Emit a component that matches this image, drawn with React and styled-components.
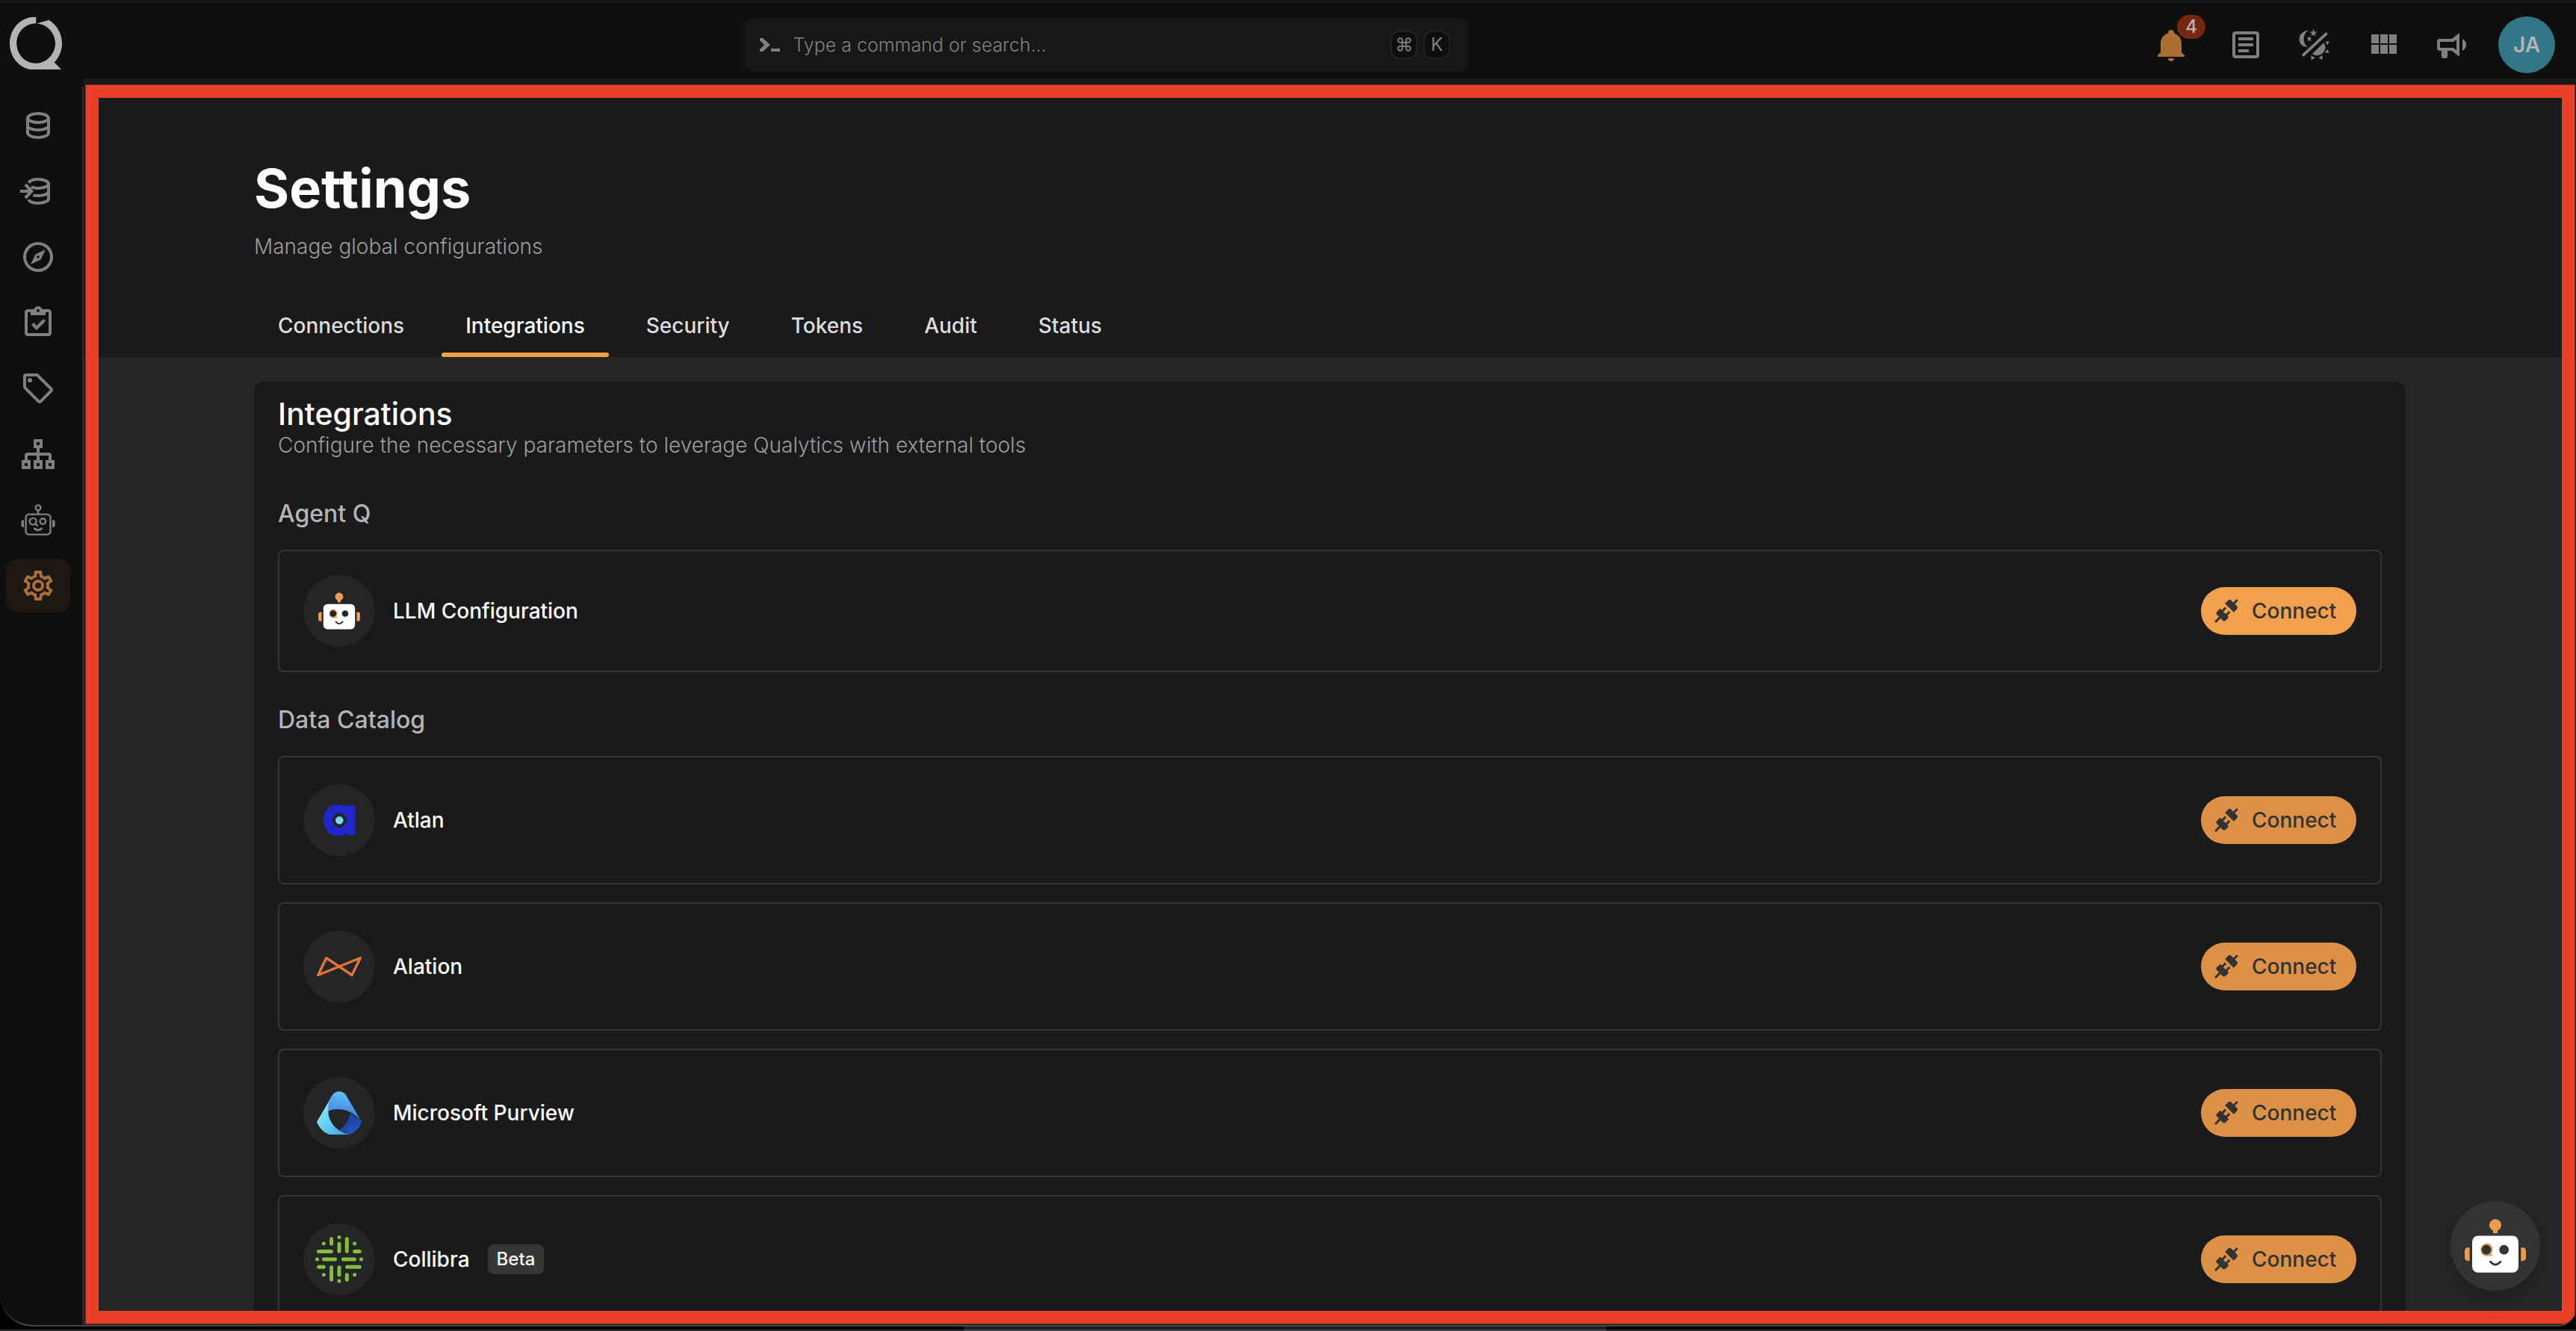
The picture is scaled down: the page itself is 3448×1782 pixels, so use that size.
import React from "react";
import styled, { createGlobalStyle, css } from "styled-components";

const colors = {
  chrome: "#0f0f0f",
  surface: "#1a1a1a",
  canvas: "#252628",
  line: "#373737",
  icon: "#808080",
  orange: "#f2a04b",
};

const GlobalStyle = createGlobalStyle`
  *, *::before, *::after { box-sizing: border-box; }
  html, body { margin: 0; background: #020204; }
  body {
    font-family: Inter, Roboto, "Liberation Sans", sans-serif;
    font-size: 28px;
    color: #ffffff;
    overflow: hidden;
  }
  h1, h2, h3, p, ul { margin: 0; padding: 0; }
  ul { list-style: none; }
  a { color: inherit; text-decoration: none; }
  button, input, kbd { font: inherit; color: inherit; }
  button { border: 0; background: none; padding: 0; cursor: pointer; }
  svg { display: block; flex: none; }
`;

const Desktop = styled.div`
  display: flex;
  flex-direction: column;
  height: 100vh;
`;

const AppWindow = styled.div`
  flex: 1;
  min-height: 0;
  display: grid;
  grid-template-columns: 112px minmax(0, 1fr);
  background: ${colors.chrome};
  border-top: 4px solid #161817;
  border-bottom: 2px solid #454746;
  border-radius: 0 0 24px 44px;
  overflow: hidden;
`;

const Dock = styled.div`
  height: 6px;
  padding-right: 8px;
  border-bottom: 2px solid #2c2c2f;
`;

const DockBar = styled.div`
  width: 25%;
  height: 6px;
  margin: 0 auto;
  background: #1c2226;
  border-bottom: 2px solid #41474b;
`;

const Sidebar = styled.aside`
  display: flex;
  flex-direction: column;
`;

const LogoLink = styled.a`
  height: 112px;
  padding: 19px 13px;
`;

const SideNav = styled.nav`
  flex: 1;
  display: flex;
  flex-direction: column;
  gap: 16px;
  padding: 16px 16px 16px 8px;
  border-right: 2px solid #2b2b2b;
`;

const SideLink = styled.a`
  display: flex;
  align-items: center;
  justify-content: center;
  height: 72px;
  border-radius: 16px;
  color: ${(p) => (p.$active ? "#aa6f32" : colors.icon)};
  background: ${(p) => (p.$active ? "#1e1812" : "transparent")};
`;

const Column = styled.div`
  display: flex;
  flex-direction: column;
  min-width: 0;
  min-height: 0;
`;

const TopBar = styled.header`
  flex: none;
  height: 101px;
  display: grid;
  grid-template-columns: minmax(0, 14fr) 968px minmax(0, 23fr);
  align-items: center;
  padding: 10px 28px 0 0;
`;

const SearchBox = styled.label`
  grid-column: 2;
  height: 72px;
  display: flex;
  align-items: center;
  gap: 8px;
  padding: 0 24px 0 16px;
  border-radius: 12px;
  background: #161817;
  color: ${colors.icon};
`;

const SearchInput = styled.input`
  flex: 1;
  min-width: 0;
  padding: 0;
  margin-left: 4px;
  border: 0;
  outline: 0;
  background: none;
  font-size: 25px;
  font-weight: 300;
  &::placeholder { color: ${colors.icon}; opacity: 1; }
`;

const Key = styled.kbd`
  width: 36px;
  height: 38px;
  display: flex;
  align-items: center;
  justify-content: center;
  border: 2px solid #222222;
  border-radius: 12px;
  background: #0e0e0e;
  font-size: 24px;
`;

const Actions = styled.div`
  display: flex;
  align-items: center;
  justify-content: flex-end;
  gap: 38px;
  color: ${colors.icon};
`;

const ActionIcons = styled.div`
  display: flex;
  gap: 44px;
`;

const IconButton = styled.button`
  position: relative;
  width: 48px;
  height: 48px;
  ${(p) => p.$alert && css`
    color: #aa6f32;
    margin-right: 8px;
  `}
`;

const Count = styled.span`
  position: absolute;
  left: 32px;
  top: -16px;
  width: 38px;
  height: 32px;
  border-radius: 16px;
  background: #77270f;
  color: #bdb4b1;
  font-size: 24px;
  font-weight: 500;
  line-height: 32px;
  text-align: center;
`;

const UserButton = styled.button`
  width: 76px;
  height: 76px;
  border-radius: 50%;
  background: #327788;
  color: #b3b3b3;
  font-weight: 600;
`;

const Main = styled.main`
  position: relative;
  flex: 1;
  min-height: 0;
  overflow: hidden;
  background: ${colors.canvas};
`;

const Highlight = styled.div`
  position: absolute;
  inset: 8px 1px 1px 2px;
  border: 18px solid #ea4028;
  outline: 1px solid #7a2a1c;
  outline-offset: -1px;
  pointer-events: none;
`;

const Container = styled.div`
  max-width: 2880px;
  margin: 0 auto;
`;

const PageHeader = styled.div`
  padding-top: 103px;
  background: ${colors.surface};
`;

const PageTitle = styled.h1`
  margin-bottom: 16px;
  font-size: 72px;
  line-height: 88px;
  font-weight: 700;
`;

const Muted = styled.p`
  line-height: 36px;
  font-weight: 300;
  color: #9c9c9c;
`;

const Tabs = styled.nav`
  display: flex;
  gap: 18px;
  margin-top: 46px;
`;

const Tab = styled.a`
  display: flex;
  flex-direction: column;
  height: 84px;
  padding: 22px 32px 0;
  line-height: 40px;
  font-weight: 500;
  color: ${(p) => (p.$active ? "#ffffff" : "#dddddd")};
  ${(p) => p.$active && css`
    &::after {
      content: "";
      height: 6px;
      margin: auto -32px 0;
      border-radius: 3px;
      background: ${colors.orange};
    }
  `}
`;

const Panel = styled.section`
  margin-top: 32px;
  padding: 20px 32px 32px;
  border-radius: 16px;
  background: ${colors.surface};
`;

const PanelTitle = styled.h2`
  font-size: 41px;
  line-height: 48px;
  font-weight: 500;
`;

const Groups = styled.div`
  display: flex;
  flex-direction: column;
  gap: 44px;
  padding-top: 54px;
`;

const GroupTitle = styled.h3`
  margin-bottom: 28px;
  font-size: 32px;
  line-height: 40px;
  font-weight: 500;
  color: #b4b4b4;
`;

const Rows = styled.ul`
  display: flex;
  flex-direction: column;
  gap: 24px;
`;

const Row = styled.li`
  display: flex;
  align-items: center;
  gap: 24px;
  height: ${(p) => (p.$compact ? 164 : 172)}px;
  padding: 0 32px;
  border: 2px solid ${colors.line};
  border-radius: 8px;
`;

const Badge = styled.span`
  width: 96px;
  height: 96px;
  display: flex;
  align-items: center;
  justify-content: center;
  border-radius: 50%;
  background: #242527;
`;

const RowName = styled.span`
  line-height: 36px;
  font-weight: 500;
`;

const Tag = styled.span`
  padding: 0 12px;
  border-radius: 8px;
  background: #363636;
  font-size: 24px;
  line-height: 40px;
  font-weight: 500;
`;

const ConnectButton = styled.button`
  display: flex;
  align-items: center;
  gap: 16px;
  min-width: 208px;
  height: 64px;
  margin-left: auto;
  padding: 0 24px 0 16px;
  border-radius: 32px;
  background: ${(p) => (p.$bright ? colors.orange : "#dc9146")};
  color: #333333;
  font-weight: 500;
`;

const ChatButton = styled.button`
  position: absolute;
  right: 48px;
  bottom: 46px;
  width: 120px;
  height: 120px;
  display: flex;
  align-items: center;
  justify-content: center;
  border-radius: 50%;
  background: #333333;
  box-shadow: 0 8px 20px rgba(0, 0, 0, 0.2);
`;

const Icon = ({ d, size = 48, children }) => (
  <svg width={size} height={size} viewBox="0 0 24 24" fill="currentColor" aria-hidden="true">
    {d ? <path d={d} fillRule="evenodd" /> : children}
  </svg>
);

const paths = {
  database:
    "M12 3C7.58 3 4 4.79 4 7V17C4 19.21 7.59 21 12 21S20 19.21 20 17V7C20 4.79 16.42 3 12 3M18 17C18 17.5 15.87 19 12 19S6 17.5 6 17V14.77C7.61 15.55 9.72 16 12 16S16.39 15.55 18 14.77V17M18 12.45C16.7 13.4 14.42 14 12 14C9.58 14 7.3 13.4 6 12.45V9.64C7.47 10.47 9.61 11 12 11C14.39 11 16.53 10.47 18 9.64V12.45M12 9C8.13 9 6 7.5 6 7S8.13 5 12 5C15.87 5 18 6.5 18 7S15.87 9 12 9Z",
  compass:
    "M7 17L10.2 10.2L17 7L13.8 13.8L7 17M12 11.1A.9 .9 0 0 0 11.1 12A.9 .9 0 0 0 12 12.9A.9 .9 0 0 0 12.9 12A.9 .9 0 0 0 12 11.1M12 2A10 10 0 0 1 22 12A10 10 0 0 1 12 22A10 10 0 0 1 2 12A10 10 0 0 1 12 2M12 4A8 8 0 0 0 4 12A8 8 0 0 0 12 20A8 8 0 0 0 20 12A8 8 0 0 0 12 4Z",
  clipboard:
    "M19 3H14.82C14.4 1.84 13.3 1 12 1S9.6 1.84 9.18 3H5C3.9 3 3 3.9 3 5V19C3 20.1 3.9 21 5 21H19C20.1 21 21 20.1 21 19V5C21 3.9 20.1 3 19 3M12 3C12.55 3 13 3.45 13 4S12.55 5 12 5 11 4.55 11 4 11.45 3 12 3M7 7H17V5H19V19H5V5H7V7M7.5 13.5L9 12L11 14L15.5 9.5L17 11L11 17L7.5 13.5Z",
  tag: "M21.41 11.58L12.41 2.58A2 2 0 0 0 11 2H4A2 2 0 0 0 2 4V11A2 2 0 0 0 2.59 12.42L11.59 21.42A2 2 0 0 0 13 22A2 2 0 0 0 14.41 21.41L21.41 14.41A2 2 0 0 0 22 13A2 2 0 0 0 21.41 11.58M13 20L4 11V4H11L20 13M6.5 5A1.5 1.5 0 1 1 5 6.5A1.5 1.5 0 0 1 6.5 5Z",
  sitemap:
    "M9 2H15V8H13V11H19A2 2 0 0 1 21 13V16H23V22H17V16H19V13H13V16H15V22H9V16H11V13H5V16H7V22H1V16H3V13A2 2 0 0 1 5 11H11V8H9V2M11 4V6H13V4H11M3 18V20H5V18H3M11 18V20H13V18H11M19 18V20H21V18H19Z",
  cog: "M12,8A4,4 0 0,1 16,12A4,4 0 0,1 12,16A4,4 0 0,1 8,12A4,4 0 0,1 12,8M12,10A2,2 0 0,0 10,12A2,2 0 0,0 12,14A2,2 0 0,0 14,12A2,2 0 0,0 12,10M10,22C9.75,22 9.54,21.82 9.5,21.58L9.13,18.93C8.5,18.68 7.96,18.34 7.44,17.94L4.95,18.95C4.73,19.03 4.46,18.95 4.34,18.73L2.34,15.27C2.21,15.05 2.27,14.78 2.46,14.63L4.57,12.97L4.5,12L4.57,11L2.46,9.37C2.27,9.22 2.21,8.95 2.34,8.73L4.34,5.27C4.46,5.05 4.73,4.96 4.95,5.05L7.44,6.05C7.96,5.66 8.5,5.32 9.13,5.07L9.5,2.42C9.54,2.18 9.75,2 10,2H14C14.25,2 14.46,2.18 14.5,2.42L14.87,5.07C15.5,5.32 16.04,5.66 16.56,6.05L19.05,5.05C19.27,4.96 19.54,5.05 19.66,5.27L21.66,8.73C21.79,8.95 21.73,9.22 21.54,9.37L19.43,11L19.5,12L19.43,13L21.54,14.63C21.73,14.78 21.79,15.05 21.66,15.27L19.66,18.73C19.54,18.95 19.27,19.04 19.05,18.95L16.56,17.95C16.04,18.34 15.5,18.68 14.87,18.93L14.5,21.58C14.46,21.82 14.25,22 14,22H10M11.25,4L10.88,6.61C9.68,6.86 8.62,7.5 7.85,8.39L5.44,7.35L4.69,8.65L6.8,10.2C6.4,11.37 6.4,12.64 6.8,13.8L4.68,15.36L5.43,16.66L7.86,15.62C8.63,16.5 9.68,17.14 10.87,17.38L11.24,20H12.76L13.13,17.39C14.32,17.14 15.37,16.5 16.14,15.62L18.57,16.66L19.32,15.36L17.2,13.81C17.6,12.64 17.6,11.37 17.2,10.2L19.31,8.65L18.56,7.35L16.15,8.39C15.38,7.5 14.32,6.86 13.12,6.62L12.75,4H11.25Z",
  bell: "M21,19V20H3V19L5,17V11C5,7.9 7.03,5.17 10,4.29C10,4.19 10,4.1 10,4A2,2 0 0,1 12,2A2,2 0 0,1 14,4C14,4.1 14,4.19 14,4.29C16.97,5.17 19,7.9 19,11V17L21,19M14,21A2,2 0 0,1 12,23A2,2 0 0,1 10,21",
  notes:
    "M5,3C3.89,3 3,3.89 3,5V19C3,20.11 3.89,21 5,21H19C20.11,21 21,20.11 21,19V5C21,3.89 20.11,3 19,3H5M5,5H19V19H5V5M7,7V9H17V7H7M7,11V13H17V11H7M7,15V17H14V15H7Z",
  modules:
    "M16,5V11H21V5M10,11H15V5H10M16,18H21V12H16M10,18H15V12H10M4,18H9V12H4M4,11H9V5H4V11Z",
  bullhorn:
    "M12 8H4A2 2 0 0 0 2 10V14A2 2 0 0 0 4 16H5V20A1 1 0 0 0 6 21H8A1 1 0 0 0 9 20V16H12L17 20V4L12 8M15 15.6L13 14H4V10H13L15 8.4V15.6M21.5 12C21.5 13.71 20.54 15.26 19 16V8C20.53 8.75 21.5 10.3 21.5 12Z",
  plug: "M21.4 7.5C22.2 8.3 22.2 9.6 21.4 10.3L18.6 13.1L10.8 5.3L13.6 2.5C14.4 1.7 15.7 1.7 16.4 2.5L18.2 4.3L21.2 1.3L22.6 2.7L19.6 5.7L21.4 7.5M15.6 13.3L14.2 11.9L11.4 14.7L9.3 12.6L12.1 9.8L10.7 8.4L7.9 11.2L6.4 9.8L3.6 12.6C2.8 13.4 2.8 14.7 3.6 15.4L5.4 17.2L1.4 21.2L2.8 22.6L6.8 18.6L8.6 20.4C9.4 21.2 10.7 21.2 11.4 20.4L14.2 17.6L12.8 16.2L15.6 13.3Z",
};

const Logo = () => (
  <svg width="70" height="70" viewBox="0 0 70 70" fill="#b3b3b3" aria-hidden="true">
    <path d="M35.3 0H29C13 2 0 17 0 35C0 53 12 67 27 70H69L59.7 60.5C66 54 70 45 70 35C70 22 63 10 52.3 3.7L36 8.4C50 9 61 21 61 35S49.5 61.7 35 61.7 9.3 50 9.3 35 21 8.3 35.3 8.3Z" />
  </svg>
);

const DatabaseImportIcon = () => (
  <Icon>
    <path d="M4.2 6.8L9 12L4.2 17.2L2.7 15.7L5.3 13H0V11H5.3L2.7 8.2Z" />
    <g fill="none" stroke="currentColor" strokeWidth="2">
      <path d="M5.6 6.4C6.5 4.9 9 4 12 4C15.9 4 19 5.4 19 7V17C19 18.6 15.9 20 12 20C9 20 6.5 19.1 5.6 17.6" />
      <path d="M7.4 9.1C8.6 9.7 10.2 10 12 10C15.9 10 19 8.6 19 7" />
      <path d="M8.6 14.7C9.6 14.9 10.8 15 12 15C15.9 15 19 13.8 19 12" />
    </g>
  </Icon>
);

const AgentIcon = () => (
  <Icon>
    <g fill="none" stroke="currentColor" strokeWidth="1.2" strokeLinecap="round">
      <circle cx="12" cy="3.9" r="1.7" />
      <path d="M12 5.8V8" />
      <rect x="3.8" y="8.3" width="16.4" height="13.5" rx="2" />
      <circle cx="8.6" cy="13" r="2.2" />
      <path d="M10.2 14.6L11.6 15.9" />
      <circle cx="15.2" cy="13" r="1.9" />
      <path d="M9.7 17.8C10.6 19.2 13.4 19.2 14.3 17.8" strokeWidth="1.4" />
    </g>
    <path d="M2.5 12V17C1.3 17 .7 16.5 .7 15.5V13.5C.7 12.5 1.3 12 2.5 12ZM21.5 12V17C22.7 17 23.3 16.5 23.3 15.5V13.5C23.3 12.5 22.7 12 21.5 12Z" />
  </Icon>
);

const ThemeIcon = () => (
  <Icon>
    <path d="M8 2.3C4.4 2.6 1.8 5.2 1.8 8.2C1.8 11.4 4.2 13.7 7.4 13.3C5.6 12.2 4.7 10.4 4.8 8C4.9 5.5 6 3.5 8 2.3Z" />
    <path d="M11.3 1.4L12 3.2L13.8 3.3L12.4 4.5L12.9 6.3L11.3 5.3L9.7 6.3L10.2 4.5L8.8 3.3L10.6 3.2ZM8.5 6L9 7.3L10.3 7.4L9.3 8.3L9.6 9.6L8.5 8.9L7.4 9.6L7.7 8.3L6.7 7.4L8 7.3Z" />
    <path d="M4 19.3L20.3 4.2" stroke="currentColor" strokeWidth="1.9" />
    <path d="M18.2 10.6A5.4 5.4 0 0 1 10.5 18Z" />
    <path d="M19.3 9.8H22L20.5 12.2ZM20.5 15L22 17.2H19ZM9.7 19L12.3 20.7L9.8 22.2ZM14.7 20.7L17.3 19V22Z" />
  </Icon>
);

const PromptIcon = () => (
  <svg width="36" height="24" viewBox="0 0 36 24" fill="currentColor" aria-hidden="true">
    <path d="M4 3H8L18 12L8 21H4V18L10 12L4 6ZM19 17H31V21H19Z" />
  </svg>
);

const Robot = ({ width, height, eye }) => (
  <svg width={width} height={height} viewBox="0 0 246 215" aria-hidden="true">
    <g fill="#eb9d4f">
      <circle cx="123" cy="24" r="24" />
      <rect x="114" y="40" width="18" height="17" />
      <path d="M20 114V168H14Q0 168 0 154V128Q0 114 14 114ZM226 114V168H232Q246 168 246 154V128Q246 114 232 114Z" />
    </g>
    <rect x="30" y="67" width="186" height="148" rx="24" fill="#ffffff" />
    <path d="M87 97A26 26 0 1 0 93 149H113L106 140A26 26 0 0 0 95 98Z" fill="#eb9d4f" />
    <circle cx="87" cy="123" r="19" fill={eye} />
    <circle cx="158" cy="123" r="19" fill={eye} />
    <path d="M103 171Q123 195 144 171" fill="none" stroke={eye} strokeWidth="8" strokeLinecap="round" />
  </svg>
);

const AtlanLogo = () => (
  <svg width="43" height="42" viewBox="0 0 43 42" aria-hidden="true">
    <path
      fill="#2027cb"
      fillRule="evenodd"
      d="M30.5 1.3H42.7V41H30.5V38.5C27 41 23.5 42 19 42C8 42 0 33 0 21S8 0 19 0C23.5 0 27.5 1.3 30.5 4ZM21.3 11.3A9.5 10 0 1 0 21.3 31.3A9.5 10 0 1 0 21.3 11.3Z"
    />
    <circle cx="21.3" cy="21.3" r="5.2" fill="#7fd8f7" />
  </svg>
);

const AlationLogo = () => (
  <svg width="60" height="28" viewBox="0 0 60 28" aria-hidden="true">
    <path
      d="M1.8 25.5L12.8 2.5L47 25.5L58.4 2.5Z"
      fill="none"
      stroke="#e37336"
      strokeWidth="3.4"
      strokeLinejoin="round"
    />
  </svg>
);

const PurviewLogo = () => (
  <svg width="60" height="58" viewBox="0 0 60 58" aria-hidden="true">
    <defs>
      <linearGradient id="purviewTop" x1=".6" y1="0" x2=".4" y2="1">
        <stop offset="0" stopColor="#62c4fb" />
        <stop offset="1" stopColor="#3a72d6" />
      </linearGradient>
      <linearGradient id="purviewLeft" x1="0" y1="0" x2=".8" y2="1">
        <stop offset="0" stopColor="#9ff0fa" />
        <stop offset=".6" stopColor="#62cdf5" />
        <stop offset="1" stopColor="#4aa4ee" />
      </linearGradient>
      <linearGradient id="purviewRight" x1="0" y1="0" x2="1" y2="1">
        <stop offset="0" stopColor="#1b3c8c" />
        <stop offset="1" stopColor="#2257c9" />
      </linearGradient>
    </defs>
    <path d="M45 28.5L60 41C58 48 52 55 44 58L30 52.5C38 46 43 39 45 28.5Z" fill="url(#purviewRight)" />
    <path d="M21 5C25 -1.5 35 -1.5 39 5L60 41C50 27 32 20 15.5 26.5C14.5 20 15 14 18 9.5Z" fill="url(#purviewTop)" />
    <path d="M16.5 13L0 41C3 49 9 55 17 58H44C28 55 15 42 15.5 26.5C15.3 21 15.5 17 16.5 13Z" fill="url(#purviewLeft)" />
  </svg>
);

const CollibraLogo = () => (
  <svg width="64" height="64" viewBox="0 0 64 64" aria-hidden="true">
    <path
      d="M4.5 21.5H21.3M52.7 21.5H59.3M2.5 32H2.6M11.5 32H26.6M37.4 32H52.5M61.4 32H61.5M4.5 42.3H11.3M42.5 42.3H59.3M11.3 11H11.4M52.6 11H52.7M11.3 52.7H11.4M52.6 52.7H52.7M21.6 4.8V11.2M32 2.5V2.6M32 11.3V21.3M42.3 4.8V21.3M21.6 42.8V59.2M32 42.8V52.7M32 61V61.1M42.3 52.8V59.2"
      fill="none"
      stroke="#83bf3b"
      strokeWidth="5"
      strokeLinecap="round"
    />
  </svg>
);

const sideItems = [
  { label: "Datastores", icon: <Icon d={paths.database} /> },
  { label: "Enrichment", icon: <DatabaseImportIcon /> },
  { label: "Explore", icon: <Icon d={paths.compass} /> },
  { label: "Library", icon: <Icon d={paths.clipboard} /> },
  { label: "Tags", icon: <Icon d={paths.tag} /> },
  { label: "Flows", icon: <Icon d={paths.sitemap} /> },
  { label: "Agent", icon: <AgentIcon /> },
  { label: "Settings", icon: <Icon d={paths.cog} />, active: true },
];

const tabs = ["Connections", "Integrations", "Security", "Tokens", "Audit", "Status"];

const groups = [
  {
    title: "Agent Q",
    compact: true,
    rows: [{ name: "LLM Configuration", logo: <Robot width={56} height={50} eye="#242527" />, bright: true }],
  },
  {
    title: "Data Catalog",
    rows: [
      { name: "Atlan", logo: <AtlanLogo /> },
      { name: "Alation", logo: <AlationLogo /> },
      { name: "Microsoft Purview", logo: <PurviewLogo /> },
      { name: "Collibra", logo: <CollibraLogo />, tag: "Beta" },
    ],
  },
];

export default function App() {
  return (
    <Desktop>
      <GlobalStyle />
      <AppWindow>
        <Sidebar>
          <LogoLink href="#home" aria-label="Home">
            <Logo />
          </LogoLink>
          <SideNav aria-label="Primary">
            {sideItems.map((item) => (
              <SideLink key={item.label} href="#nav" aria-label={item.label} $active={item.active}>
                {item.icon}
              </SideLink>
            ))}
          </SideNav>
        </Sidebar>
        <Column>
          <TopBar>
            <SearchBox>
              <PromptIcon />
              <SearchInput aria-label="Search" placeholder="Type a command or search..." />
              <Key>⌘</Key>
              <Key>K</Key>
            </SearchBox>
            <Actions>
              <ActionIcons>
                <IconButton aria-label="Notifications" $alert>
                  <Icon d={paths.bell} />
                  <Count>4</Count>
                </IconButton>
                <IconButton aria-label="Notes"><Icon d={paths.notes} /></IconButton>
                <IconButton aria-label="Theme"><ThemeIcon /></IconButton>
                <IconButton aria-label="Views"><Icon d={paths.modules} /></IconButton>
                <IconButton aria-label="Announcements"><Icon d={paths.bullhorn} /></IconButton>
              </ActionIcons>
              <UserButton>JA</UserButton>
            </Actions>
          </TopBar>
          <Main>
            <PageHeader>
              <Container>
                <PageTitle>Settings</PageTitle>
                <Muted>Manage global configurations</Muted>
                <Tabs aria-label="Settings sections">
                  {tabs.map((tab) => (
                    <Tab key={tab} href="#tab" $active={tab === "Integrations"}>{tab}</Tab>
                  ))}
                </Tabs>
              </Container>
            </PageHeader>
            <Container>
              <Panel>
                <PanelTitle>Integrations</PanelTitle>
                <Muted>Configure the necessary parameters to leverage Qualytics with external tools</Muted>
                <Groups>
                  {groups.map((group) => (
                    <div key={group.title}>
                      <GroupTitle>{group.title}</GroupTitle>
                      <Rows>
                        {group.rows.map((row) => (
                          <Row key={row.name} $compact={group.compact}>
                            <Badge>{row.logo}</Badge>
                            <RowName>{row.name}</RowName>
                            {row.tag && <Tag>{row.tag}</Tag>}
                            <ConnectButton $bright={row.bright}>
                              <Icon d={paths.plug} size={36} />
                              Connect
                            </ConnectButton>
                          </Row>
                        ))}
                      </Rows>
                    </div>
                  ))}
                </Groups>
              </Panel>
            </Container>
            <ChatButton aria-label="Open Agent Q">
              <Robot width={82} height={72} eye="#333333" />
            </ChatButton>
            <Highlight />
          </Main>
        </Column>
      </AppWindow>
      <Dock>
        <DockBar />
      </Dock>
    </Desktop>
  );
}
